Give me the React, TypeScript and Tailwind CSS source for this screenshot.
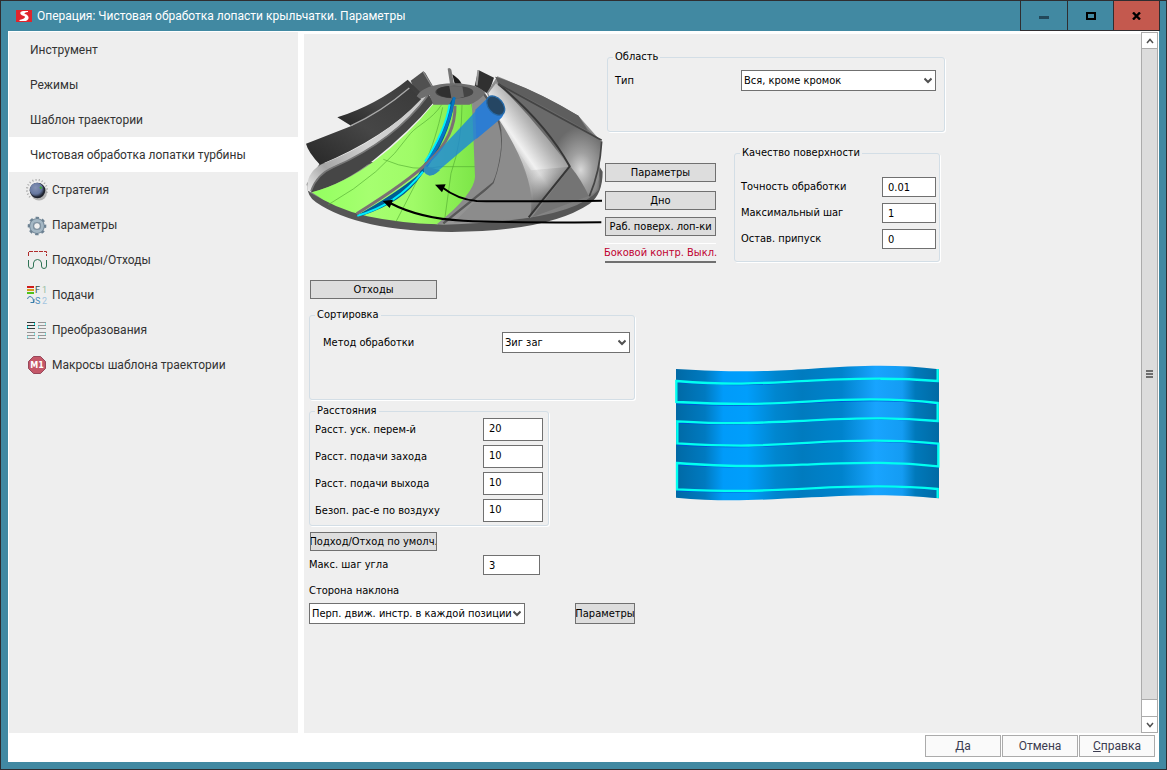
import React from "react";

const LABEL = "text-[11px] leading-[14px] text-black";

function PushButton({ children, className = "h-[19px]" }: { children: React.ReactNode; className?: string }) {
  return (
    <button
      type="button"
      className={`flex items-center justify-center overflow-hidden border border-[#707070] bg-[#dddddd] pt-px text-[11px] leading-[14px] whitespace-nowrap text-black ${className}`}
    >
      {children}
    </button>
  );
}

function Combo({ id, value, className = "" }: { id: string; value: string; className?: string }) {
  return (
    <div className={`relative ${className}`}>
      <select
        id={id}
        className="block h-[21px] w-full appearance-none border border-[#707070] bg-white pr-3 pl-[2px] text-[11px] leading-[14px] text-black"
      >
        <option>{value}</option>
      </select>
      <svg className="pointer-events-none absolute top-[7px] right-1 h-[7px] w-2" viewBox="0 0 8 7" fill="none">
        <path d="M0.500 1.500 L4 5 L7.500 1.500" stroke="#505050" strokeWidth="2" />
      </svg>
    </div>
  );
}

function Group({ title, children, className = "" }: { title: string; children: React.ReactNode; className?: string }) {
  return (
    <fieldset className={`rounded-[3px] border border-[#d3dee6] shadow-[1px_1px_0_#ffffff] ${className}`}>
      <legend className={`ml-[5px] px-[2px] ${LABEL}`}>{title}</legend>
      {children}
    </fieldset>
  );
}

function NumberRow({
  id,
  label,
  value,
  inputClass,
}: {
  id: string;
  label: string;
  value: string;
  inputClass: string;
}) {
  return (
    <div className="flex items-center justify-between">
      <label htmlFor={id} className={LABEL}>
        {label}
      </label>
      <input
        id={id}
        defaultValue={value}
        className={`border border-[#707070] bg-white pl-[5px] text-[11px] leading-[14px] text-black ${inputClass}`}
      />
    </div>
  );
}

const KnobIcon = () => (
  <svg viewBox="0 0 22 22" className="h-[22px] w-[22px]">
    <defs>
      <radialGradient id="knob" cx="0.4" cy="0.35" r="0.65">
        <stop offset="0" stopColor="#8593b5" />
        <stop offset="0.7" stopColor="#66779f" />
        <stop offset="1" stopColor="#2c3447" />
      </radialGradient>
    </defs>
    <path d="M4 18 A10 10 0 1 1 20.500 14" fill="none" stroke="#a4a4a4" strokeWidth="2" strokeDasharray="1 2.14" />
    <circle cx="13" cy="13.500" r="8" fill="#8c8c8c" opacity="0.6" />
    <circle cx="11.500" cy="11.500" r="7.800" fill="#20242e" />
    <circle cx="10.800" cy="10.800" r="7" fill="url(#knob)" />
    <path d="M14 8 L15.500 9.500" stroke="#3fae35" strokeWidth="2" />
  </svg>
);

const GearIcon = () => (
  <svg viewBox="0 0 22 22" className="h-[22px] w-[22px]">
    <circle cx="11" cy="12" r="8" fill="none" stroke="#6d8293" strokeWidth="2.600" strokeDasharray="3.3 2.983" strokeDashoffset="1.600" />
    <circle cx="11" cy="12" r="5.600" fill="none" stroke="#6d8293" strokeWidth="4.400" />
    <circle cx="11" cy="12" r="5.500" fill="none" stroke="#a4b7c4" strokeWidth="2.800" />
    <circle cx="11" cy="12" r="3.400" fill="#efefef" stroke="#6d8293" />
  </svg>
);

const ApproachIcon = () => (
  <svg viewBox="0 0 22 22" className="h-[22px] w-[22px]" fill="none">
    <path d="M2.500 7 V2.500 H20.500 V7" stroke="#b02a2a" strokeDasharray="4 1" />
    <path d="M2.500 11 V17 Q2.800 19.500 5 19.500 Q7.500 19.500 7.500 17 V14 Q8 10.500 11.500 10.500 Q15 10.500 15.500 14 V17 Q15.500 19.500 18 19.500 Q20.500 19.500 20.500 17 V11" stroke="#2f7355" />
  </svg>
);

const FeedIcon = () => (
  <svg viewBox="0 0 22 22" className="h-[22px] w-[22px]">
    <path d="M1 3 H8" stroke="#cf1c1c" strokeWidth="2" />
    <path d="M1 6 H8" stroke="#d49a1c" strokeWidth="2" />
    <path d="M1 9 H8" stroke="#51c21c" strokeWidth="2" />
    <text x="9" y="9" fontSize="9" fill="#2f5148" fontFamily="Roboto">F</text>
    <text x="16" y="9" fontSize="9" fill="#95bd9e" fontFamily="Roboto">1</text>
    <path d="M1.500 15 Q2 12.500 4 12.500 Q7.500 13 7.500 18 M4.500 18.500 H8 V15" stroke="#3a7eab" fill="none" />
    <text x="9" y="20" fontSize="9" fill="#4a8dbc" fontFamily="Roboto">S</text>
    <text x="16" y="20" fontSize="9" fill="#a3c5e0" fontFamily="Roboto">2</text>
  </svg>
);

const TransformIcon = () => (
  <svg viewBox="0 0 22 22" className="h-[22px] w-[22px]" fill="none" shapeRendering="crispEdges">
    <path d="M1 3.500 H9 M1 6.500 H9 M1 9.500 H9" stroke="#2f3b3b" />
    <path d="M12 3.500 H20 M12 6.500 H20 M12 9.500 H20 M1 13.500 H9 M1 16.500 H9 M1 19.500 H9 M12 13.500 H20 M12 16.500 H20 M12 19.500 H20" stroke="#969696" />
    <path d="M8.500 4 V6 M1.500 7 V9" stroke="#00dede" />
    <path d="M19.500 4 V6 M12.500 7 V9 M8.500 14 V16 M1.500 17 V19 M19.500 14 V16 M12.500 17 V19" stroke="#79e6e6" />
  </svg>
);

const MacroIcon = () => (
  <svg viewBox="0 0 22 22" className="h-[22px] w-[22px]">
    <path d="M7.500 2.500 H14.500 L19.500 7.500 V14.500 L14.500 19.500 H7.500 L2.500 14.500 V7.500 Z" fill="#c45768" stroke="#96475a" />
    <text x="11" y="14" textAnchor="middle" fontSize="8" fontWeight="700" fill="#ffffff" fontFamily="DejaVu Sans">M1</text>
  </svg>
);

const SECTIONS = ["Инструмент", "Режимы", "Шаблон траектории", "Чистовая обработка лопатки турбины"];

const PAGES = [
  { title: "Стратегия", Icon: KnobIcon },
  { title: "Параметры", Icon: GearIcon },
  { title: "Подходы/Отходы", Icon: ApproachIcon },
  { title: "Подачи", Icon: FeedIcon },
  { title: "Преобразования", Icon: TransformIcon },
  { title: "Макросы шаблона траектории", Icon: MacroIcon },
];

function Impeller() {
  return (
    <svg viewBox="15 105 900 510" className="h-[170px] w-[300px] shrink-0" fill="none">
      <defs>
        <linearGradient id="green" x1="0" y1="0" x2="1" y2="0">
          <stop offset="0" stopColor="#93ff60" />
          <stop offset="0.35" stopColor="#a6ff70" />
          <stop offset="0.62" stopColor="#a0fb68" />
          <stop offset="1" stopColor="#7de648" />
        </linearGradient>
        <linearGradient id="metal" gradientUnits="userSpaceOnUse" x1="600" y1="390" x2="800" y2="250">
          <stop offset="0" stopColor="#777777" />
          <stop offset="0.3" stopColor="#f1f1f1" />
          <stop offset="0.55" stopColor="#b4b4b4" />
          <stop offset="1" stopColor="#555555" />
        </linearGradient>
        <linearGradient id="lower" gradientUnits="userSpaceOnUse" x1="640" y1="330" x2="770" y2="480">
          <stop offset="0" stopColor="#9a9a9a" stopOpacity="0" />
          <stop offset="0.65" stopColor="#aaaaaa" stopOpacity="0.3" />
          <stop offset="1" stopColor="#6a6a6a" />
        </linearGradient>
        <radialGradient id="shine" gradientUnits="userSpaceOnUse" cx="842" cy="420" r="130" gradientTransform="translate(842 420) scale(0.7 1) translate(-842 -420)">
          <stop offset="0" stopColor="#d8d8d8" />
          <stop offset="0.4" stopColor="#a0a0a0" />
          <stop offset="1" stopColor="#6a6a6a" />
        </radialGradient>
        <linearGradient id="dark" x1="0" y1="1" x2="1" y2="0">
          <stop offset="0" stopColor="#272727" />
          <stop offset="0.5" stopColor="#464646" />
          <stop offset="1" stopColor="#3a3a3a" />
        </linearGradient>
        <linearGradient id="pale" gradientUnits="userSpaceOnUse" x1="20" y1="490" x2="380" y2="200">
          <stop offset="0" stopColor="#eeeeee" />
          <stop offset="0.2" stopColor="#a5a5a5" />
          <stop offset="0.5" stopColor="#d2d2d2" />
          <stop offset="1" stopColor="#c9c9c9" />
        </linearGradient>
        <linearGradient id="floor" x1="0" y1="0" x2="1" y2="0">
          <stop offset="0" stopColor="#808080" />
          <stop offset="0.5" stopColor="#969696" />
          <stop offset="1" stopColor="#797979" />
        </linearGradient>
      </defs>
      <path d="M20 462 Q22 500 48 517 Q175 604 455 606 Q745 604 868 522 Q908 493 908 425 L880 380 L60 400 Z" fill="#565656" />
      <path d="M22 470 Q30 420 90 405 L890 390 Q905 440 895 480 Q820 574 430 584 Q160 565 30 488 Z" fill="url(#floor)" />

      <path d="M443 116 Q449 111 454 119 L462 162 H450 Z" fill="#777777" />
      <path d="M457 133 Q477 146 485 161 H464 Z" fill="#1c1c1c" />
      <path d="M535 120 L582 143 L565 192 L524 168 Z" fill="#303030" />
      <path d="M535 120 L530 166" stroke="#969696" strokeWidth="6" />
      <path d="M332 152 L370 124 L376 129 L402 174 L350 196 Z" fill="#505050" />
      <path d="M370 126 L397 171" stroke="#8b8b8b" strokeWidth="4" />

      <path d="M112 262 Q230 224 323 149 L360 185 L330 230 L153 287 Z" fill="url(#dark)" />
      <path d="M18 341 L156 287 L330 174 L366 209 Q250 325 60 404 Q24 366 18 341 Z" fill="url(#dark)" />
      <path d="M153 287 Q242 247 328 174" stroke="#aaaaaa" strokeWidth="4" />
      <path d="M22 482 Q17 430 62 404 Q245 334 363 208 L384 190 L389 200 Q281 330 97 412 Q49 443 33 486 Z" fill="url(#pale)" />
      <path d="M33 484 Q49 432 100 412 Q285 330 385 193 L402 216 Q329 304 220 391 Q128 463 37 487 Z" fill="#464646" />
      <path d="M33 484 Q50 433 100 412 Q285 330 383 197" stroke="#777777" strokeWidth="5" />

      <path d="M400 222 Q322 318 226 391 Q132 462 35 487 Q102 536 202 559 Q302 580 413 583 Q510 505 525 450 Q529 330 516 218 Z" fill="url(#green)" />
      <path d="M425 224 C395 270 353 285 331 311 Q247 432 85 524 M428 232 C398 370 363 430 288 575 M486 225 Q486 335 453 430 L432 583 M515 222 Q532 310 528 380 M250 388 Q343 428 420 410 L526 410" stroke="#54ad32" strokeWidth="3" opacity="0.65" />

      <path d="M516 218 L552 192 Q620 270 604 372 Q596 434 580 458 L430 582 L410 583 Q525 490 525 440 Z" fill="#8b8b8b" />
      <path d="M552 192 Q620 280 604 374 Q595 432 581 459 L430 580" stroke="#585858" strokeWidth="7" />
      <path d="M560 189 L592 139 Q741 198 835 257 L905 336 L896 450 L868 502 L810 408 L691 563 L460 578 L581 460 Q620 350 598 270 Z" fill="#8c8c8c" />
      <path d="M588 160 Q730 286 808 410 L690 559 Q714 450 598 270 L565 190 Z" fill="url(#metal)" />
      <path d="M600 282 L693 421 L808 410 L690 559 Q710 490 681 439 Z" fill="url(#lower)" />
      <path d="M586 140 Q700 187 835 257 L863 298 L905 336 L892 474 Q880 500 864 488 Q734 300 596 162 Z" fill="url(#shine)" />
      <path d="M586 140 Q701 176 835 257 L863 303 Q720 220 596 162 Z" fill="#5e5e5e" />
      <path d="M812 410 Q845 450 866 498 L696 562 Z" fill="#747474" />
      <path d="M595 162 Q738 280 809 409 L686 562" stroke="#363636" strokeWidth="6" />
      <path d="M595 162 L905 331 M905 334 Q900 425 868 499" stroke="#444444" strokeWidth="5" />

      <path d="M350 199 Q370 162 462 160 Q540 162 556 190 Q534 216 508 224 H400 L388 195 L361 207 Z" fill="#6e6e6e" />
      <ellipse cx="463" cy="186" rx="57" ry="19" fill="#444444" />
      <path d="M410 187 Q408 170 448 168 L455 204 Q416 202 410 187 Z" fill="#303030" />
      <path d="M448 168 L454 204 Q475 206 492 200 L487 169 Z" fill="#696969" />

      <path d="M448 223 Q437 290 396 364 L354 435 Q288 490 169 557 L186 557 Q310 517 365 435 Q447 331 466 205 L460 200 Z" fill="#005d94" />
      <path d="M463 202 Q442 321 369 413" stroke="#0874c4" strokeWidth="8" />
      <path d="M449 223 Q435 304 375 395 M369 425 Q288 526 172 557" stroke="#00efff" strokeWidth="6" />
      <path d="M465 227 Q467 318 387 394 Q325 455 170 551" stroke="#7c7074" strokeWidth="9" />

      <path d="M374 408 Q383 435 400 435 L600 265 L563 205 Z" fill="#1c86d9" fillOpacity="0.8" />
      <path d="M374 408 Q364 432 389 437 Q402 437 420 421 Z" fill="#2e8ebb" />
      <path d="M526 239 L564 203 L611 247 Q612 258 600 268 L529 327 Z" fill="#2d7dd2" />
      <ellipse cx="587" cy="227" rx="22" ry="33" transform="rotate(-40 587 227)" fill="#254663" stroke="#266aa8" strokeWidth="4" />

      <path d="M424 470 Q473 508 530 513 Q575 515 906 512 M270 519 Q360 566 490 572 Q610 578 904 577" stroke="#000000" strokeWidth="6" />
      <path d="M405 464 L437 463 L426 487 Z M248 513 L279 509 L269 534 Z" fill="#000000" />
    </svg>
  );
}

function WavePreview() {
  return (
    <svg viewBox="24 24 810 420" className="h-[140px] w-[270px] shrink-0" fill="none">
      <defs>
        <linearGradient id="sheet" x1="0" y1="0" x2="1" y2="0">
          <stop offset="0" stopColor="#0069a5" />
          <stop offset="0.110" stopColor="#007ac0" />
          <stop offset="0.180" stopColor="#009bfa" />
          <stop offset="0.270" stopColor="#009efc" />
          <stop offset="0.380" stopColor="#0086cf" />
          <stop offset="0.480" stopColor="#007bbf" />
          <stop offset="0.630" stopColor="#0083cd" />
          <stop offset="0.760" stopColor="#18a4ff" />
          <stop offset="0.860" stopColor="#149cf3" />
          <stop offset="0.910" stopColor="#0079bb" />
          <stop offset="1" stopColor="#006aa4" />
        </linearGradient>
      </defs>
      <path d="M33 39 C210 49 286 48 440 38 S700 25 822 40 V427 C700 415 610 415 440 424 S170 438 33 425 Z" fill="url(#sheet)" />
      <g stroke="#0054d4" strokeWidth="3">
        <path d="M34 80 C220 90 290 87 440 76 S700 69 820 78" />
        <path d="M34 144 C220 151 290 147 440 140 S700 130 820 146" />
        <path d="M36 202 C220 207 290 205 440 196 S700 187 820 198" />
        <path d="M36 268 C220 276 290 272 440 263 S700 253 820 269" />
        <path d="M36 327 C220 337 290 332 440 326 S700 316 820 334" />
        <path d="M36 405 C220 410 290 408 440 399 S700 389 820 402" />
      </g>
      <path
        d="M818 39 V75 C700 66 610 66 440 74 S210 89 34 75 V138 C220 147 290 145 440 136 S700 127 818 141 V195 C700 185 610 185 440 193 S220 206 37 196 V262 C220 273 290 269 440 260 S700 251 820 263 V331 C700 318 610 319 440 325 S220 334 36 321 V400 C220 408 290 405 440 397 S700 387 818 399 V426"
        stroke="#00fff0"
        strokeWidth="7"
      />
    </svg>
  );
}

function Scrollbar() {
  return (
    <div className="flex w-[17px] shrink-0 flex-col border border-[#ababab] bg-white">
      <button type="button" aria-label="Вверх" className="flex h-4 items-center justify-center border-b border-[#ababab]">
        <svg viewBox="0 0 8 6" className="h-[6px] w-2" fill="none">
          <path d="M1 5 L4 1.500 L7 5" stroke="#505050" strokeWidth="1.500" />
        </svg>
      </button>
      <div className="flex flex-1 flex-col items-center justify-center gap-px border-b border-[#ababab] bg-[#dcdcdc]">
        <span className="h-[2px] w-[7px] bg-[#6e6e6e]" />
        <span className="h-[2px] w-[7px] bg-[#6e6e6e]" />
        <span className="h-[2px] w-[7px] bg-[#6e6e6e]" />
      </div>
      <div className="h-4" />
      <button type="button" aria-label="Вниз" className="flex h-4 items-center justify-center border-t border-[#ababab]">
        <svg viewBox="0 0 8 6" className="h-[6px] w-2" fill="none">
          <path d="M1 1 L4 4.500 L7 1" stroke="#505050" strokeWidth="1.500" />
        </svg>
      </button>
    </div>
  );
}

function TitleBar() {
  return (
    <header className="flex h-[30px] shrink-0 items-stretch bg-[#4189a2]">
      <div className="flex flex-1 items-center gap-[5px] pl-[15px]">
        <svg viewBox="0 0 16 12" className="h-3 w-4">
          <rect width="16" height="12" fill="#e0252c" />
          <path d="M12 1 H7 Q3.500 1.500 4.500 4 Q5 5 9 6.500 Q9.500 8.500 3.500 10 V11 H10 Q13.500 9 12.300 6.500 Q11.500 4.500 8.500 3.700 Q8 2.500 12 2 Z" fill="#ffffff" />
        </svg>
        <h1 className="font-['Roboto',sans-serif] text-[12px] leading-4 text-white">
          Операция: Чистовая обработка лопасти крыльчатки. Параметры
        </h1>
      </div>
      <div className="mr-[6px] flex border-b border-[#2f2d30]">
        <button type="button" aria-label="Свернуть" className="flex w-[47px] items-center justify-center border-l border-[#2f2d30]">
          <span className="mt-1 h-[3px] w-[10px] bg-[#22485a]" />
        </button>
        <button type="button" aria-label="Развернуть" className="flex w-[46px] items-center justify-center border-l border-[#2f2d30]">
          <span className="h-2 w-[10px] border-2 border-black" />
        </button>
        <button type="button" aria-label="Закрыть" className="flex w-[47px] items-center justify-center border-x border-[#2f2d30] bg-[#c4594e]">
          <svg viewBox="0 0 9 8" className="h-2 w-[9px]">
            <path d="M1 0.500 L8 7.500 M8 0.500 L1 7.500" stroke="#000000" strokeWidth="2.400" />
          </svg>
        </button>
      </div>
    </header>
  );
}

export default function App() {
  return (
    <div className="flex min-h-screen flex-col border border-[#2f2d30] bg-[#4189a2]">
      <TitleBar />
      <div className="mx-[7px] mb-[7px] flex flex-1 flex-col border-l border-white bg-white">
        <div className="flex flex-1 pt-px">
          <nav className="w-[289px] shrink-0 bg-[#eeeeee] font-['Roboto',sans-serif] text-[12px] leading-4 text-[#333333]">
            <ul>
              {SECTIONS.map((title, i) => (
                <li key={title}>
                  <a
                    href="#"
                    className={`flex h-[35px] items-center pl-[21px] ${i === SECTIONS.length - 1 ? "bg-white" : ""}`}
                  >
                    {title}
                  </a>
                </li>
              ))}
              {PAGES.map(({ title, Icon }) => (
                <li key={title}>
                  <a href="#" className="flex h-[35px] items-center gap-1 pl-[17px]">
                    <Icon />
                    {title}
                  </a>
                </li>
              ))}
            </ul>
          </nav>

          <main className="mt-[2px] ml-[6px] flex-1 bg-[#efefef] font-['DejaVu_Sans_Condensed','DejaVu_Sans',sans-serif]">
            <div className="flex pt-4">
              <div className="pt-[15px] pl-px">
                <Impeller />
              </div>
              <div className="flex flex-col gap-[14px]">
                <Group title="Область" className="ml-[2px] h-[82px] w-[338px]">
                  <div className="flex items-center justify-between pt-[6px] pr-2 pl-[7px]">
                    <label htmlFor="area-type" className={LABEL}>
                      Тип
                    </label>
                    <Combo id="area-type" value="Вся, кроме кромок" className="w-[195px]" />
                  </div>
                </Group>
                <div className="flex items-start gap-[18px]">
                  <div className="flex w-[111px] flex-col gap-[7px] pt-[17px]">
                    <PushButton className="mb-[2px] h-[19px]">Параметры</PushButton>
                    <PushButton>Дно</PushButton>
                    <PushButton>Раб. поверх. лоп-ки</PushButton>
                    <button
                      type="button"
                      className="flex h-5 items-center justify-center border-t border-b-2 border-t-white border-b-[#707070] text-[11px] leading-[14px] whitespace-nowrap text-[#c00030]"
                    >
                      Боковой контр. Выкл.
                    </button>
                  </div>
                  <Group title="Качество поверхности" className="h-[116px] w-[206px]">
                    <div className="flex flex-col gap-[6px] pt-[17px] pr-[3px] pl-[6px]">
                      <NumberRow id="accuracy" label="Точность обработки" value="0.01" inputClass="h-5 w-[54px]" />
                      <NumberRow id="max-step" label="Максимальный шаг" value="1" inputClass="h-5 w-[54px]" />
                      <NumberRow id="allowance" label="Остав. припуск" value="0" inputClass="h-5 w-[54px]" />
                    </div>
                  </Group>
                </div>
              </div>
            </div>

            <div className="flex gap-[38px] pt-[17px] pb-4 pl-[5px]">
              <div className="w-[326px]">
                <PushButton className="ml-px h-[19px] w-[127px]">Отходы</PushButton>
                <Group title="Сортировка" className="mt-[9px] h-[92px]">
                  <div className="flex items-center justify-between pt-[10px] pr-1 pl-[13px]">
                    <label htmlFor="sort-method" className={LABEL}>
                      Метод обработки
                    </label>
                    <Combo id="sort-method" value="Зиг заг" className="w-32" />
                  </div>
                </Group>
                <Group title="Расстояния" className="mt-1 h-[122px] w-60">
                  <div className="flex flex-col gap-1 pr-[5px] pl-[5px]">
                    <NumberRow id="rapid" label="Расст. уск. перем-й" value="20" inputClass="h-[23px] w-[60px] pb-[2px]" />
                    <NumberRow id="feed-in" label="Расст. подачи захода" value="10" inputClass="h-[23px] w-[60px] pb-[2px]" />
                    <NumberRow id="feed-out" label="Расст. подачи выхода" value="10" inputClass="h-[23px] w-[60px] pb-[2px]" />
                    <NumberRow id="air" label="Безоп. рас-е по воздуху" value="10" inputClass="h-[23px] w-[60px] pb-[2px]" />
                  </div>
                </Group>
                <PushButton className="mt-[6px] ml-px h-[19px] w-[127px]">Подход/Отход по умолч.</PushButton>
                <div className="mt-1 w-[231px]">
                  <NumberRow id="angle-step" label="Макс. шаг угла" value="3" inputClass="h-5 w-[57px]" />
                </div>
                <label htmlFor="tilt-side" className={`mt-[9px] block ${LABEL}`}>
                  Сторона наклона
                </label>
                <div className="mt-[5px] flex items-center justify-between">
                  <Combo id="tilt-side" value="Перп. движ. инстр. в каждой позиции" className="w-[216px]" />
                  <PushButton className="h-[21px] w-[60px]">Параметры</PushButton>
                </div>
              </div>
              <div className="pt-[84px]">
                <WavePreview />
              </div>
            </div>
          </main>
          <Scrollbar />
          <div className="w-px shrink-0 bg-white" />
        </div>

        <footer className="flex justify-end gap-px pt-[2px] pr-1 pb-[5px] font-['Roboto',sans-serif] text-[12px] leading-4 text-[#3c3c50]">
          <button type="button" className="h-[22px] w-[76px] border border-[#ababab] bg-[#fafafa]">
            <span className="underline">Д</span>а
          </button>
          <button type="button" className="h-[22px] w-[76px] border border-[#ababab] bg-[#fafafa]">
            Отмена
          </button>
          <button type="button" className="h-[22px] w-[76px] border border-[#ababab] bg-[#fafafa]">
            <span className="underline">С</span>правка
          </button>
        </footer>
      </div>
    </div>
  );
}
